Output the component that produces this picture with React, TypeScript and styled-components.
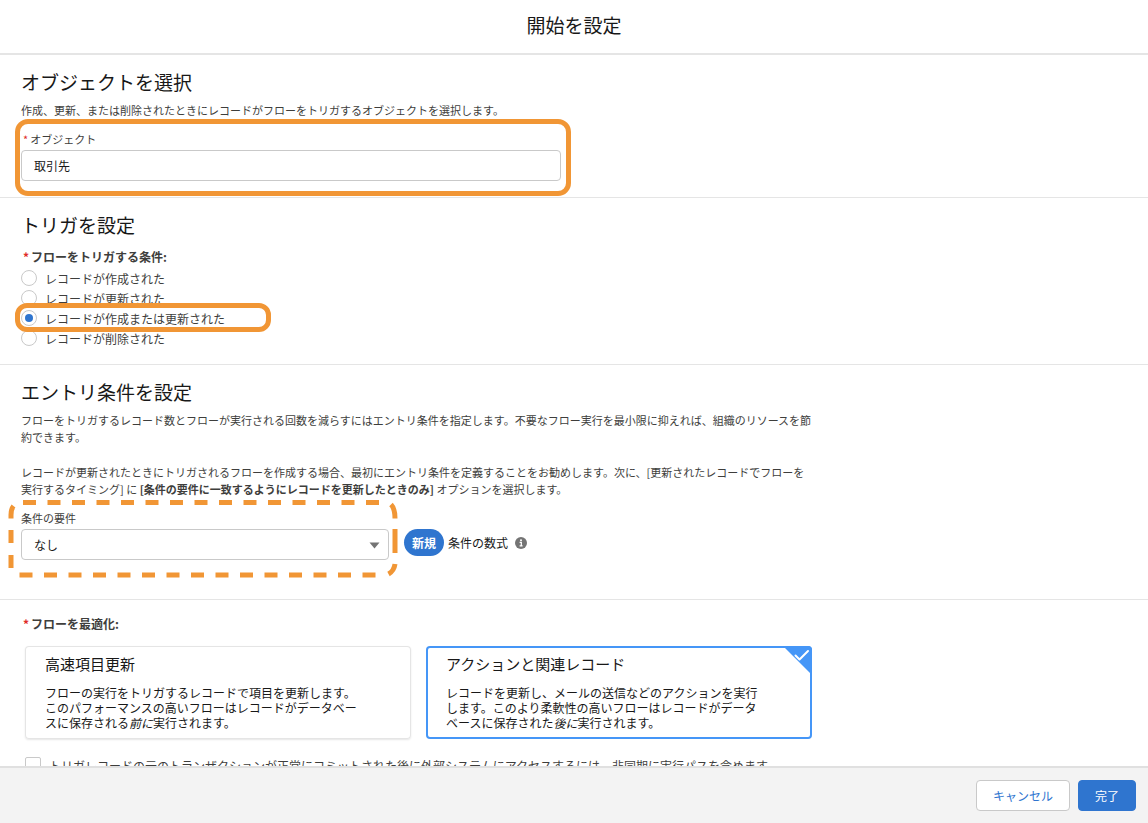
import React, { useState } from "react";
import styled, { createGlobalStyle, css } from "styled-components";

const color = {
  blue: "#2f75cf",
  selected: "#4596f7",
  highlight: "#f19635",
  line: "#e5e5e5",
  control: "#c9c9c9",
  ink: "#181818",
  text: "#3e3e3c",
  required: "#e02b27",
  icon: "#747474",
};

const GlobalStyle = createGlobalStyle`
  *, *::before, *::after { box-sizing: border-box; }
  body {
    margin: 0;
    background: #fff;
    color: ${color.text};
    font: 400 12px/17px "Noto Sans CJK JP", "Liberation Sans", sans-serif;
  }
  h1, h2, h3, p { margin: 0; font-weight: 400; }
  input, select, button { font: inherit; }
`;

const Dialog = styled.div`
  display: flex;
  flex-direction: column;
  height: 100vh;
`;

const Header = styled.header`
  flex: none;
  padding: 12px 16px 15px;
  border-bottom: 2px solid ${color.line};
  text-align: center;
`;

const Title = styled.h1`
  font-size: 19px;
  line-height: 26px;
  color: ${color.ink};
`;

const Body = styled.main`
  flex: 1;
  min-height: 0;
  overflow: hidden;
`;

const Section = styled.section<{ $bottom?: number }>`
  padding: 15px 21px ${(p) => p.$bottom ?? 16}px;
  border-bottom: 1px solid ${color.line};

  &:last-child { border-bottom: 0; }
`;

const Heading = styled.h2`
  font-size: 19px;
  line-height: 24px;
  color: ${color.ink};
`;

const Description = styled.p`
  max-width: 794px;
  margin-top: 8px;
  font-size: 11px;

  & + & { margin-top: 18px; }
`;

const Field = styled.div<{ $width: number }>`
  position: relative;
  flex: 0 1 ${(p) => p.$width}px;
  max-width: ${(p) => p.$width}px;
`;

const Label = styled.label`
  display: block;
  margin-bottom: 2px;
  font-size: 11px;
`;

const Required = styled.abbr`
  padding: 0 2px;
  color: ${color.required};
  text-decoration: none;
`;

const control = css`
  display: block;
  width: 100%;
  height: 31px;
  padding: 0 12px;
  border: 1px solid ${color.control};
  border-radius: 4px;
  background: #fff;
  color: ${color.ink};
  font-size: 12px;
`;

const TextInput = styled.input`
  ${control}
`;

const SelectBox = styled.div`
  position: relative;
`;

const Select = styled.select`
  ${control}
  appearance: none;
`;

const SelectArrow = styled.svg`
  position: absolute;
  right: 9px;
  top: 13px;
  pointer-events: none;
`;

const ObjectRow = styled.div`
  margin-top: 12px;
`;

const Highlight = styled.div<{ $inset: string; $radius: number }>`
  position: absolute;
  z-index: 1;
  inset: ${(p) => p.$inset};
  border: 5px solid ${color.highlight};
  border-radius: ${(p) => p.$radius}px;
  pointer-events: none;
`;

const DashedHighlight = styled.svg`
  position: absolute;
  left: -16px;
  top: -14px;
  pointer-events: none;
`;

const Group = styled.fieldset<{ $top?: number }>`
  min-width: 0;
  margin: ${(p) => p.$top ?? 0}px 0 0;
  padding: 0;
  border: 0;
`;

const Legend = styled.legend`
  margin-bottom: 3px;
  padding: 0;
  font-weight: 700;
`;

const Option = styled.label`
  position: relative;
  display: flex;
  align-items: center;
  gap: 8px;
  width: 250px;
  height: 20px;
`;

const Radio = styled.input`
  appearance: none;
  display: grid;
  place-items: center;
  width: 16px;
  height: 16px;
  margin: 0;
  border: 1px solid ${color.control};
  border-radius: 50%;
  background: #fff;

  &:checked::before {
    content: "";
    width: 8px;
    height: 8px;
    border-radius: 50%;
    background: ${color.blue};
  }
`;

const ConditionRow = styled.div`
  display: flex;
  align-items: flex-end;
  gap: 15px;
  margin-top: 12px;
`;

const Formula = styled.div`
  display: flex;
  align-items: center;
  gap: 4px;
  height: 27px;
  margin-bottom: 4px;
  color: ${color.ink};
`;

const NewBadge = styled.span`
  padding: 5px 8px;
  border-radius: 14px;
  background: ${color.blue};
  color: #fff;
  font-weight: 700;
`;

const InfoButton = styled.button`
  display: flex;
  padding: 0;
  margin-left: 3px;
  border: 0;
  background: none;
`;

const Cards = styled.div`
  display: grid;
  grid-template-columns: repeat(2, minmax(0, 386px));
  gap: 15px;
  margin: 11px 4px 0;
`;

const Card = styled.label<{ $selected: boolean }>`
  position: relative;
  min-height: 93px;
  padding: 8px 46px 8px 20px;
  border-radius: 4px;
  color: ${color.ink};
  box-shadow: ${(p) =>
    p.$selected
      ? `inset 0 0 0 2px ${color.selected}`
      : `inset 0 0 0 1px ${color.line}, 0 1px 2px rgba(0, 0, 0, 0.1)`};
`;

const HiddenRadio = styled.input`
  position: absolute;
  opacity: 0;
  pointer-events: none;
`;

const CardTitle = styled.h3`
  font-size: 15px;
  line-height: 20px;
`;

const CardText = styled.p`
  margin-top: 11px;
  line-height: 15px;
`;

const CardTick = styled.svg`
  position: absolute;
  top: 0;
  right: 0;
`;

const CheckOption = styled.label`
  display: flex;
  align-items: center;
  gap: 8px;
  height: 20px;
  margin: 16px 4px 0;
`;

const Checkbox = styled.input`
  appearance: none;
  flex: none;
  width: 16px;
  height: 16px;
  margin: 0;
  border: 1px solid ${color.control};
  border-radius: 2px;
  background: #fff;

  &:checked { background: ${color.blue}; }
`;

const Footer = styled.footer`
  flex: none;
  display: flex;
  justify-content: flex-end;
  gap: 8px;
  padding: 12px;
  border-top: 2px solid #e0e0e0;
  background: #f3f3f3;
`;

const Button = styled.button<{ $primary?: boolean }>`
  height: 31px;
  padding: 0 16px;
  border: 1px solid ${(p) => (p.$primary ? color.blue : color.control)};
  border-radius: 4px;
  background: ${(p) => (p.$primary ? color.blue : "#fff")};
  color: ${(p) => (p.$primary ? "#fff" : color.blue)};
`;

const triggers = [
  "レコードが作成された",
  "レコードが更新された",
  "レコードが作成または更新された",
  "レコードが削除された",
];

const optimizations = [
  {
    title: "高速項目更新",
    before:
      "フローの実行をトリガするレコードで項目を更新します。このパフォーマンスの高いフローはレコードがデータベースに保存される",
    timing: "前に",
  },
  {
    title: "アクションと関連レコード",
    before:
      "レコードを更新し、メールの送信などのアクションを実行します。このより柔軟性の高いフローはレコードがデータベースに保存された",
    timing: "後に",
  },
];

export default function App() {
  const [object, setObject] = useState("取引先");
  const [trigger, setTrigger] = useState(2);
  const [optimization, setOptimization] = useState(1);

  return (
    <Dialog lang="ja">
      <GlobalStyle />
      <Header>
        <Title>開始を設定</Title>
      </Header>

      <Body>
        <Section>
          <Heading>オブジェクトを選択</Heading>
          <Description>
            作成、更新、または削除されたときにレコードがフローをトリガするオブジェクトを選択します。
          </Description>
          <ObjectRow>
            <Field $width={540}>
              <Label htmlFor="object">
                <Required title="必須">*</Required>オブジェクト
              </Label>
              <TextInput
                id="object"
                value={object}
                onChange={(e) => setObject(e.target.value)}
              />
              <Highlight $inset="-12px -10px -15px -6px" $radius={13} />
            </Field>
          </ObjectRow>
        </Section>

        <Section>
          <Heading>トリガを設定</Heading>
          <Group $top={11}>
            <Legend>
              <Required title="必須">*</Required>フローをトリガする条件:
            </Legend>
            {triggers.map((text, i) => (
              <Option key={text}>
                <Radio
                  type="radio"
                  name="trigger"
                  checked={trigger === i}
                  onChange={() => setTrigger(i)}
                />
                {text}
                {i === 2 && <Highlight as="span" $inset="-5px 0 -4px -6px" $radius={12} />}
              </Option>
            ))}
          </Group>
        </Section>

        <Section $bottom={39}>
          <Heading>エントリ条件を設定</Heading>
          <Description>
            フローをトリガするレコード数とフローが実行される回数を減らすにはエントリ条件を指定します。不要なフロー実行を最小限に抑えれば、組織のリソースを節約できます。
          </Description>
          <Description>
            レコードが更新されたときにトリガされるフローを作成する場合、最初にエントリ条件を定義することをお勧めします。次に、[更新されたレコードでフローを実行するタイミング] に{" "}
            <strong>[条件の要件に一致するようにレコードを更新したときのみ]</strong>{" "}
            オプションを選択します。
          </Description>
          <ConditionRow>
            <Field $width={368}>
              <Label htmlFor="condition">条件の要件</Label>
              <SelectBox>
                <Select id="condition" defaultValue="none">
                  <option value="none">なし</option>
                </Select>
                <SelectArrow width="11" height="7" viewBox="0 0 11 7" aria-hidden="true">
                  <path d="M0.5 0.5H10.5L5.5 6.5Z" fill={color.icon} />
                </SelectArrow>
              </SelectBox>
              <DashedHighlight
                width="396"
                height="84"
                viewBox="0 0 396 84"
                fill="none"
                stroke={color.highlight}
                strokeWidth="5"
                aria-hidden="true"
              >
                <path d="M18 6.5H376M14.5 79H372" strokeDasharray="13 11.5" />
                <path d="M6 22.5V19Q6 13 8.5 10M6 34V47M6 59V72" />
                <path d="M386 8.5Q390 12.5 390 22.5M390 33V57M390 68Q389 75 383.5 78" />
              </DashedHighlight>
            </Field>
            <Formula>
              <NewBadge>新規</NewBadge>
              条件の数式
              <InfoButton type="button" aria-label="ヘルプ">
                <svg width="12" height="12" viewBox="0 0 12 12" aria-hidden="true">
                  <circle cx="6" cy="6" r="6" fill={color.icon} />
                  <circle cx="6" cy="3.2" r="1" fill="#fff" />
                  <path d="M4.6 5.4H6.3V8.6M4.6 8.8H7.6" fill="none" stroke="#fff" strokeWidth="1.3" />
                </svg>
              </InfoButton>
            </Formula>
          </ConditionRow>
        </Section>

        <Section>
          <Group>
            <Legend>
              <Required title="必須">*</Required>フローを最適化:
            </Legend>
            <Cards>
              {optimizations.map((item, i) => (
                <Card key={item.title} $selected={optimization === i}>
                  <HiddenRadio
                    type="radio"
                    name="optimization"
                    checked={optimization === i}
                    onChange={() => setOptimization(i)}
                  />
                  <CardTitle>{item.title}</CardTitle>
                  <CardText>
                    {item.before}
                    <em>{item.timing}</em>実行されます。
                  </CardText>
                  {optimization === i && (
                    <CardTick width="29" height="29" viewBox="0 0 29 29" aria-hidden="true">
                      <path d="M0 0H25Q29 0 29 4V29Z" fill={color.selected} />
                      <path
                        d="M12.5 9.5L16.5 13.5L25 5"
                        fill="none"
                        stroke="#fff"
                        strokeWidth="2"
                        strokeLinecap="round"
                        strokeLinejoin="round"
                      />
                    </CardTick>
                  )}
                </Card>
              ))}
            </Cards>
          </Group>
          <CheckOption>
            <Checkbox type="checkbox" />
            トリガレコードの元のトランザクションが正常にコミットされた後に外部システムにアクセスするには、非同期に実行パスを含めます。
          </CheckOption>
        </Section>
      </Body>

      <Footer>
        <Button type="button">キャンセル</Button>
        <Button type="button" $primary>
          完了
        </Button>
      </Footer>
    </Dialog>
  );
}
